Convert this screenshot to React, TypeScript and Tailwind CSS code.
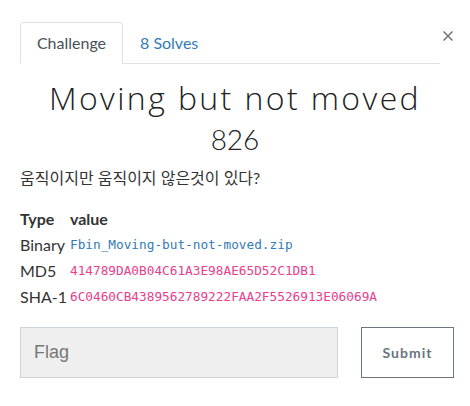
import { X } from "lucide-react"

export default function App() {
  return (
    <div className="w-[470px] h-[406px] bg-white text-[#333] font-['Lato','Noto_Sans_CJK_KR',sans-serif]">
      <div className="px-5 pt-[22px]">
        {/* Tabs + close */}
        <div className="flex items-start">
          <div className="flex w-[420px] border-b border-[#dee2e6]">
            <div className="h-[42px] w-[103px] -mb-px flex items-center justify-center border border-[#dee2e6] border-b-white rounded-t bg-white text-[16px] text-[#495057]">
              Challenge
            </div>
            <div className="h-[41px] px-[17px] flex items-center text-[16px] text-[#337ab7]">
              8 Solves
            </div>
          </div>
          <button className="ml-auto mr-[-6px] mt-[6px] text-[#777]">
            <X className="w-[16px] h-[16px]" strokeWidth={2.5} />
          </button>
        </div>

        {/* Title */}
        <div className="text-center pt-[14px]">
          <h1 className="font-['Open_Sans',sans-serif] font-light text-[32px] leading-[40px] tracking-[2.4px] text-[#222]">
            Moving but not moved
          </h1>
          <div className="text-[28px] font-light leading-[34px] mt-[4px] text-[#222]">826</div>
        </div>

        <p className="mt-[10px] text-[16px] leading-[24px] text-[#333]">움직이지만 움직이지 않은것이 있다?</p>

        {/* File table */}
        <table className="mt-[17px] text-[16px] text-[#333]">
          <thead>
            <tr className="h-[24px]">
              <th className="text-left font-bold pr-[8px]">Type</th>
              <th className="text-left font-bold">value</th>
            </tr>
          </thead>
          <tbody>
            <tr className="h-[27px]">
              <td>Binary</td>
              <td className="font-['DejaVu_Sans_Mono',monospace] text-[12.75px] text-[#337ab7]">Fbin_Moving-but-not-moved.zip</td>
            </tr>
            <tr className="h-[26px]">
              <td>MD5</td>
              <td className="font-['DejaVu_Sans_Mono',monospace] text-[12.75px] text-[#e83e8c]">414789DA0B04C61A3E98AE65D52C1DB1</td>
            </tr>
            <tr className="h-[26px]">
              <td className="pr-[3px]">SHA-1</td>
              <td className="font-['DejaVu_Sans_Mono',monospace] text-[12.75px] text-[#e83e8c]">6C0460CB4389562789222FAA2F5526913E06069A</td>
            </tr>
          </tbody>
        </table>

        {/* Flag form */}
        <div className="flex mt-[17px] items-start">
          <input
            placeholder="Flag"
            className="shrink-0 w-[318px] h-[51px] bg-[#efefef] border border-[#ced4da] px-[13px] font-['Liberation_Sans',sans-serif] text-[18px] placeholder:text-[#777] outline-none"
          />
          <button className="shrink-0 ml-[23px] w-[93px] h-[51px] border border-[#6c757d] text-[#6c757d] font-bold text-[14px] tracking-[1px]">
            Submit
          </button>
        </div>
      </div>
    </div>
  )
}
